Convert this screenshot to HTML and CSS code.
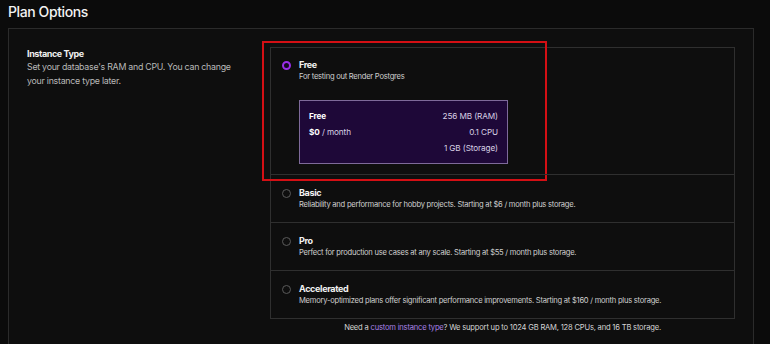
FILE: index.html
```html
<!DOCTYPE html>
<html lang="en">
<head>
  <meta charset="UTF-8" />
  <title>Plan Options</title>
  <meta name="viewport" content="width=device-width, initial-scale=1" />
  <link rel="stylesheet" href="styles.css">
</head>
<body>

  <h1 class="page-title">Plan Options</h1>

  <div class="card">
    <!-- Left: section info -->
    <div class="section-info">
      <h2>Instance Type</h2>
      <p>Set your database's RAM and CPU. You can change your instance type later.</p>
    </div>

    <!-- Right: plan list -->
    <div class="plans">
      <div class="options">
        <div class="option selected">
          <span class="radio"></span>
          <div class="option-body">
            <div class="option-title">Free</div>
            <div class="option-desc">For testing out Render Postgres</div>
            <div class="plan-box">
              <div class="plan-col">
                <div><b>Free</b></div>
                <div><b>$0</b> / month</div>
              </div>
              <div class="plan-col right">
                <div>256 MB (RAM)</div>
                <div>0.1 CPU</div>
                <div>1 GB (Storage)</div>
              </div>
            </div>
          </div>
          <div class="highlight"></div>
        </div>

        <div class="option">
          <span class="radio"></span>
          <div class="option-body">
            <div class="option-title">Basic</div>
            <div class="option-desc">Reliability and performance for hobby projects. Starting at $6 / month plus storage.</div>
          </div>
        </div>

        <div class="option">
          <span class="radio"></span>
          <div class="option-body">
            <div class="option-title">Pro</div>
            <div class="option-desc">Perfect for production use cases at any scale. Starting at $55 / month plus storage.</div>
          </div>
        </div>

        <div class="option">
          <span class="radio"></span>
          <div class="option-body">
            <div class="option-title">Accelerated</div>
            <div class="option-desc">Memory-optimized plans offer significant performance improvements. Starting at $160 / month plus storage.</div>
          </div>
        </div>
      </div>

      <p class="note">Need a <a href="#">custom instance type</a>? We support up to 1024 GB RAM, 128 CPUs, and 16 TB storage.</p>
    </div>
  </div>

</body>
</html>
```

FILE: styles.css
```css
body {
  margin: 0;
  padding: 0;
  font-family: 'Inter', 'Noto Sans', sans-serif;
  background-color: #0b0b0b;
  color: #e8e8e8;
  height: 344px;
  overflow: hidden;
}

.page-title {
  margin: 0;
  padding: 3px 8px 0;
  height: 25px;
  font-size: 14px;
  line-height: 18px;
  font-weight: 500;
  letter-spacing: -0.4px;
  color: #f2f2f2;
}

/* --- Card --- */
.card {
  margin-left: 8px;
  width: 746px;
  box-sizing: border-box;
  height: 330px;
  border: 1px solid #2b2b2b;
  background: #0e0e0e;
  padding: 18px 18px 0 18px;
  display: flex;
  gap: 27px;
}

.section-info {
  width: 216px;
  flex-shrink: 0;
}
.section-info h2 {
  margin: 1px 0 0;
  font-size: 9px;
  font-weight: 700;
  letter-spacing: -0.4px;
  color: #f0f0f0;
  line-height: 12px;
}
.section-info p {
  margin: 0;
  font-size: 8.8px;
  line-height: 14px;
  letter-spacing: -0.25px;
  color: #b9b9b9;
}

.plans {
  width: 465px;
}

.options {
  border: 1px solid #2f2f2f;
}

.option {
  position: relative;
  display: flex;
  gap: 8px;
  padding: 12px 10px 11px 11px;
  border-top: 1px solid #2f2f2f;
}
.option:first-child {
  border-top: none;
  padding: 11px 10px 10px 11px;
}

.radio {
  width: 9px;
  height: 9px;
  box-sizing: border-box;
  border-radius: 50%;
  border: 1px solid #5a5a5a;
  margin-top: 2px;
  flex-shrink: 0;
}
.selected .radio {
  border: 2.5px solid #9a2ee8;
  background: #14081f;
}

.option-title {
  font-size: 9px;
  font-weight: 700;
  line-height: 12px;
  letter-spacing: -0.35px;
  color: #f2f2f2;
}
.option-desc {
  font-size: 7.6px;
  line-height: 12px;
  letter-spacing: -0.25px;
  color: #cfcfcf;
}

/* --- Free plan details --- */
.plan-box {
  margin-top: 17px;
  width: 209px;
  height: 64px;
  box-sizing: border-box;
  border: 1px solid #7e6a9a;
  background: #1e0838;
  padding: 7px 9px;
  display: flex;
  justify-content: space-between;
  font-size: 8.2px;
  line-height: 16px;
  letter-spacing: -0.1px;
  color: #d8d0e4;
}
.plan-box b {
  color: #fff;
  font-weight: 700;
}
.plan-col.right {
  text-align: right;
}

/* annotation frame around the selected option */
.highlight {
  position: absolute;
  left: -9px;
  top: -7px;
  width: 285px;
  height: 140px;
  box-sizing: border-box;
  border: 2px solid #d40f14;
  pointer-events: none;
}

.note {
  margin: 3px 0 0;
  text-align: center;
  font-size: 7.6px;
  line-height: 12px;
  letter-spacing: -0.2px;
  color: #d4d4d4;
}
.note a {
  color: #a982e6;
  text-decoration: none;
}
```
